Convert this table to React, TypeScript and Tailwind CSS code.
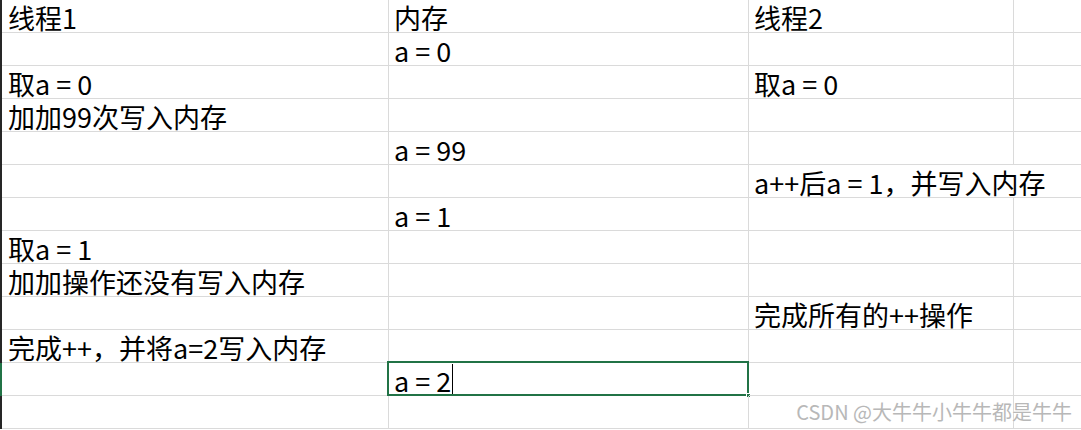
import React from 'react';

type Row = {
  a?: string;
  b?: string;
  c?: string;
  spill?: boolean;
  active?: boolean;
};

const rows: Row[] = [
  { a: '线程1', b: '内存', c: '线程2' },
  { b: 'a = 0' },
  { a: '取a = 0', c: '取a = 0' },
  { a: '加加99次写入内存' },
  { b: 'a = 99' },
  { c: 'a++后a = 1，并写入内存', spill: true },
  { b: 'a = 1' },
  { a: '取a = 1' },
  { a: '加加操作还没有写入内存' },
  { c: '完成所有的++操作' },
  { a: '完成++，并将a=2写入内存' },
  { b: 'a = 2', active: true },
  {},
];

const cell =
  'relative flex h-full items-end border-b border-[#dadada] pl-[5px] pb-[1px] text-[27px] leading-[27px] whitespace-nowrap text-black';

function App() {
  return (
    <div
      className="relative h-[430px] w-[1081px] overflow-hidden bg-white"
      style={{ fontFamily: '"Noto Sans CJK SC", "Liberation Sans", sans-serif' }}
    >
      {rows.map((row, i) => (
        <div key={i} className="flex h-[33px]">
          <div className={row.active ? 'w-[2px] bg-[#217346]' : 'w-[2px] bg-[#262626]'} />
          <div className={`${cell} w-[387px] border-r pl-[6px]`}>{row.a}</div>
          <div className={`${cell} w-[360px] border-r`}>
            {row.b}
            {row.active && (
              <>
                <span className="mb-[-1px] ml-[1px] h-[31px] w-px bg-black" />
                <div className="absolute -top-[2px] -bottom-[1px] -left-[2px] -right-[1px] border-2 border-[#217346]">
                  <div className="absolute -right-[4px] -bottom-[4px] h-[5px] w-[5px] border border-white bg-[#217346]" />
                </div>
              </>
            )}
          </div>
          <div
            className={`${cell} w-[265px] ${row.spill ? 'z-10 overflow-visible' : 'border-r'}`}
          >
            {row.c}
          </div>
          <div className={`${cell} flex-1`} />
        </div>
      ))}
      <div className="absolute right-[9px] bottom-[6px] text-[20px] leading-[24px] text-[#b8b8b8] [text-shadow:0_0_2px_#fff]">
        CSDN @大牛牛小牛牛都是牛牛
      </div>
    </div>
  );
}

export default App;
